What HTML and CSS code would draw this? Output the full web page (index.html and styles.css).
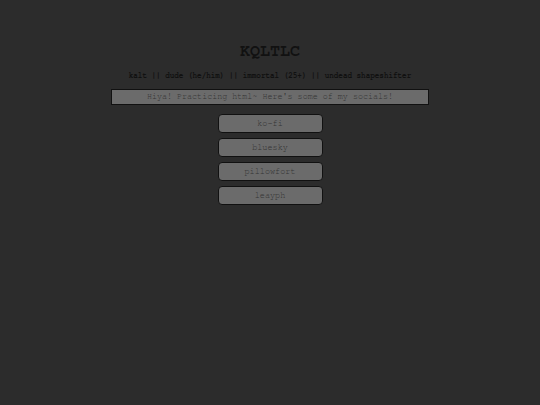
FILE: index.html
```html
<!DOCTYPE html>
<html>
<head>
<meta charset="utf-8">
<link rel="stylesheet" href="styles.css">
</head>
<body>
<main class="page">
  <h1 class="title">KQLTLC</h1>
  <p class="tagline">kalt || dude (he/him) || immortal (25+) || undead shapeshifter</p>
  <div class="banner">Hiya! Practicing html~ Here's some of my socials!</div>
  <nav class="links">
    <a class="link" href="#">ko-fi</a>
    <a class="link" href="#">bluesky</a>
    <a class="link" href="#">pillowfort</a>
    <a class="link" href="#">leayph</a>
  </nav>
</main>
</body>
</html>
```
FILE: styles.css
```css
html, body {
  margin: 0;
  padding: 0;
  background: #2c2c2c;
  height: 100%;
}
.page {
  font-family: "Nimbus Mono PS", "FreeMono", "Nimbus Mono L", "Courier", "Liberation Mono", monospace;
  display: flex;
  flex-direction: column;
  align-items: center;
  padding-top: 42px;
}
.title {
  margin: 0;
  font-size: 16.7px;
  line-height: 18px;
  font-weight: bold;
  color: #111;
}
.tagline {
  margin: 11px 0 0;
  font-size: 7.6px;
  line-height: 10px;
  font-weight: bold;
  color: #111;
}
.banner {
  margin-top: 8px;
  box-sizing: border-box;
  width: 318px;
  height: 16px;
  border: 1px solid #111;
  background: #6b6b6b;
  color: #333;
  font-size: 8.4px;
  line-height: 14px;
  text-align: center;
}
.links {
  margin-top: 9px;
  display: flex;
  flex-direction: column;
  gap: 5px;
}
.link {
  box-sizing: border-box;
  width: 105px;
  height: 19px;
  border: 1px solid #111;
  border-radius: 4px;
  background: #6b6b6b;
  color: #333;
  font-size: 8.5px;
  line-height: 17px;
  text-align: center;
  text-decoration: none;
}
```
